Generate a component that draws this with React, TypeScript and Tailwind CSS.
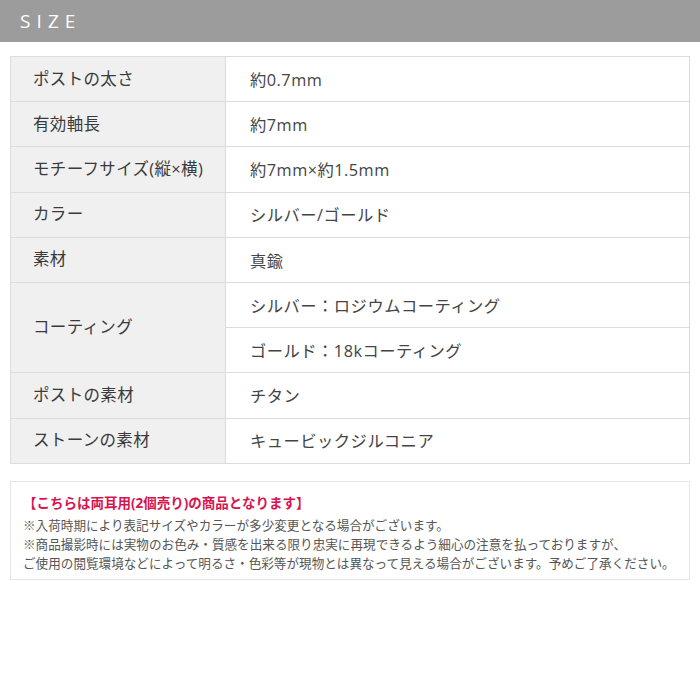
const rows: { label: string; values: string[] }[] = [
  { label: 'ポストの太さ', values: ['約0.7mm'] },
  { label: '有効軸長', values: ['約7mm'] },
  { label: 'モチーフサイズ(縦×横)', values: ['約7mm×約1.5mm'] },
  { label: 'カラー', values: ['シルバー/ゴールド'] },
  { label: '素材', values: ['真鍮'] },
  { label: 'コーティング', values: ['シルバー：ロジウムコーティング', 'ゴールド：18kコーティング'] },
  { label: 'ポストの素材', values: ['チタン'] },
  { label: 'ストーンの素材', values: ['キュービックジルコニア'] },
]

const font = { fontFamily: '"Open Sans", "Noto Sans CJK JP", sans-serif' }

export default function App() {
  return (
    <div className="w-[700px] h-[700px] bg-white text-[#3a3a3a]" style={font}>
      <div className="h-[42px] bg-[#9c9c9c] flex items-center pl-[20px]">
        <span className="text-white text-[19px] tracking-[0.32em]">SIZE</span>
      </div>

      <div className="px-[10px] pt-[14px]">
        <table className="w-[680px] border-collapse border border-[#dcdcdc]">
          <tbody>
            {rows.map(r =>
              r.values.map((v, i) => (
                <tr key={r.label + i}>
                  {i === 0 && (
                    <td
                      rowSpan={r.values.length}
                      className="w-[215px] bg-[#f0f0f0] border border-[#dcdcdc] pl-[22px] text-[16.5px] tracking-[0.02em] align-middle"
                    >
                      {r.label}
                    </td>
                  )}
                  <td className="h-[45.2px] border border-[#dcdcdc] pl-[24px] pt-[2px] text-[16.3px] tracking-[0.03em] text-[#444] align-middle">
                    {v}
                  </td>
                </tr>
              ))
            )}
          </tbody>
        </table>

        <div className="mt-[17px] border border-[#e6e6e6] pl-[12px] pr-[4px] pt-[10px] pb-[6px]">
          <p className="text-[13.5px] font-bold text-[#d6154f] leading-[22px]">【こちらは両耳用(2個売り)の商品となります】</p>
          <div className="mt-[2px] text-[12.6px] text-[#555] leading-[19px] whitespace-nowrap">
            <p>※入荷時期により表記サイズやカラーが多少変更となる場合がございます。</p>
            <p>※商品撮影時には実物のお色み・質感を出来る限り忠実に再現できるよう細心の注意を払っておりますが、</p>
            <p>ご使用の閲覧環境などによって明るさ・色彩等が現物とは異なって見える場合がございます。予めご了承ください。</p>
          </div>
        </div>
      </div>
    </div>
  )
}
